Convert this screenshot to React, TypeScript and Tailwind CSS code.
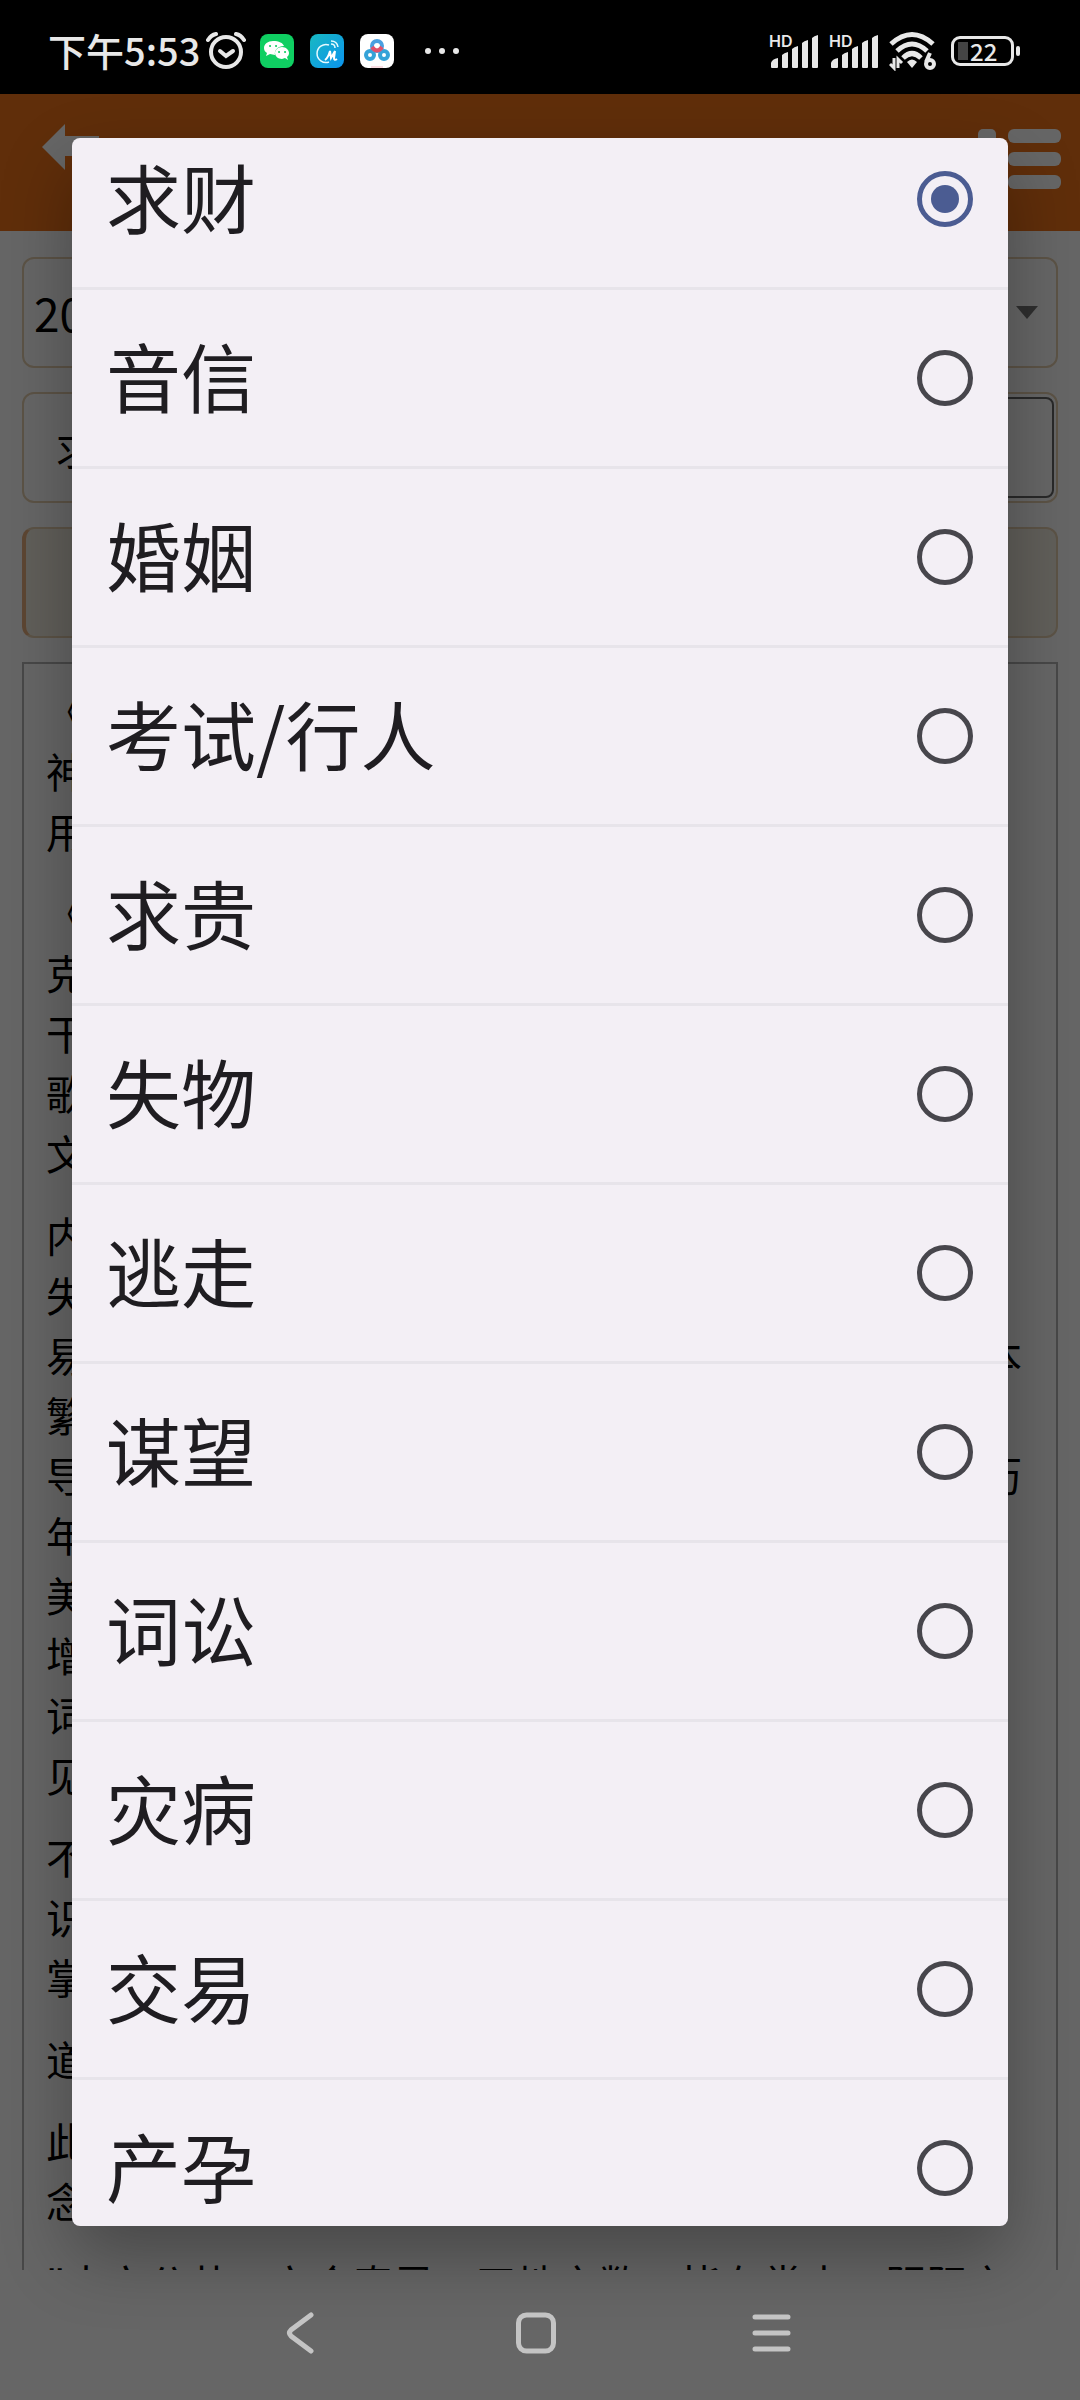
import { useState } from "react";

const OPTIONS = [
  "求财",
  "音信",
  "婚姻",
  "考试/行人",
  "求贵",
  "失物",
  "逃走",
  "谋望",
  "词讼",
  "灾病",
  "交易",
  "产孕",
];

// Each paragraph is a list of lines: [start, end]
const PARAGRAPHS: [string, string][][] = [
  [["《", ""], ["神", ""], ["用", ""]],
  [["《", ""], ["克", ""], ["干", ""], ["歌", ""], ["文", ""]],
  [
    ["内", ""],
    ["失", ""],
    ["易", "本"],
    ["繁", ""],
    ["导", "历"],
    ["年", ""],
    ["美", ""],
    ["增", ""],
    ["词", ""],
    ["见", ""],
  ],
  [["不", ""], ["识", ""], ["掌", ""]],
  [["道", ""]],
  [["此", ""], ["念", ""]],
  [["\"大六公共，六合奇灵，天地之数，皆在掌中，阴阳之", ""]],
];

const SignalIcon = () => (
  <div className="relative h-9 w-[52px]">
    <svg width="52" height="36" viewBox="0 0 52 36" fill="#e8e8e8">
      <path d="M2 34v-4q1-4 7-5v9q0 1-1 1h-5q-1 0-1-1zM13 22q2-2 6-3v15q0 1-1 1h-4q-1 0-1-1zM23 16q2-2 6-3v21q0 1-1 1h-4q-1 0-1-1zM33 10q2-2 6-3v27q0 1-1 1h-4q-1 0-1-1zM43 5q2-2 6-3v32q0 1-1 1h-4q-1 0-1-1z" />
    </svg>
    <span className="absolute top-0 left-0 font-['Inter',sans-serif] text-base leading-4 font-semibold">HD</span>
  </div>
);

const WifiIcon = () => (
  <svg width="48" height="40" viewBox="0 0 48 40" fill="none" stroke="#e8e8e8">
    <path d="M2 13q21-19 42 0" strokeWidth="5" />
    <path d="M8 20q15-14 30 0" strokeWidth="5" />
    <path d="M14 27q9-9 18 0" strokeWidth="5" />
    <path d="M18 31q5-5 10 0l-5 6z" fill="#e8e8e8" stroke="none" />
    <path d="M5 27v10l-4-4M9 37v-9l4 4" strokeWidth="3" />
    <circle cx="41" cy="33" r="4" strokeWidth="4" />
    <path d="M37 31l4-9" strokeWidth="4" />
  </svg>
);

const Battery = () => (
  <div className="ml-1.5 flex items-center gap-0.5">
    <div className="flex h-[30px] w-[63px] items-center rounded-[9px] border-3 border-[#e8e8e8] pl-1">
      <div className="h-[18px] w-2.5 bg-[#444]"></div>
      <span className="pl-0.5 text-2xl leading-6 font-medium">22</span>
    </div>
    <div className="h-2.5 w-1 rounded-full bg-[#e8e8e8]"></div>
  </div>
);

const StatusBar = () => (
  <div className="flex h-[94px] shrink-0 items-center bg-black pl-12 pr-[60px] pt-2 text-[#e8e8e8]">
    <span className="pb-0.5 text-[38px] leading-none font-medium">下午5:53</span>
    <svg className="ml-1.5" width="40" height="38" viewBox="0 0 40 38" fill="none" stroke="#e8e8e8" strokeLinecap="round">
      <circle cx="20" cy="20" r="15" strokeWidth="4" />
      <path d="M14 19l6 5 7-5" strokeWidth="4" />
      <path d="M2 8q3-5 8-6M30 2q5 1 8 6" strokeWidth="4" />
    </svg>
    <div className="ml-3.5 flex gap-4">
      <svg width="34" height="34" viewBox="0 0 34 34">
        <rect width="34" height="34" rx="8" fill="#0fcf62" />
        <path d="M13 7c-5 0-9 3-9 7 0 2 1 4 3 5l-1 3 4-2 5 1c-1-5 3-9 9-9-1-3-5-5-11-5z" fill="#fff" />
        <path d="M22 13c-4 0-7 3-7 6s3 6 7 6l3-1 3 2-1-3c1-1 2-2 2-4 0-3-3-6-7-6z" fill="#fff" />
        <path d="M10 12h.1M16 12h.1M19 18h.1M25 18h.1" stroke="#0fcf62" strokeWidth="2" strokeLinecap="round" />
      </svg>
      <svg width="34" height="34" viewBox="0 0 34 34" fill="none">
        <defs>
          <linearGradient id="blue" x1="0" y1="0" x2="1" y2="1">
            <stop offset="0" stopColor="#18b9c2" />
            <stop offset="1" stopColor="#0b93ee" />
          </linearGradient>
        </defs>
        <rect width="34" height="34" rx="8" fill="url(#blue)" />
        <path d="M19 11a9 9 0 1 0 0 17" stroke="#e6faff" strokeWidth="1.5" />
        <path d="M15 26q3-2 5-9l1 7 4-7-1 7q0 3 3 1" stroke="#fff" strokeWidth="2" />
        <path d="M21 10q4 0 4 4M21 7q6 0 7 6" stroke="#e6faff" strokeWidth="1.5" />
      </svg>
      <svg width="34" height="34" viewBox="0 0 34 34" fill="none" strokeWidth="4">
        <rect width="34" height="34" rx="8" fill="#fff" />
        <circle cx="10" cy="21" r="4" stroke="#35a3d8" />
        <circle cx="24" cy="21" r="4" stroke="#35a3d8" />
        <circle cx="17" cy="12" r="5" stroke="#4a9fe0" />
        <path d="M12 13q5 7 10 0" stroke="#e0506a" />
        <path d="M11 33h12" stroke="#f3b9c4" strokeWidth="1" />
      </svg>
    </div>
    <svg className="ml-[30px]" width="36" height="8" viewBox="0 0 36 8" fill="#e8e8e8">
      <circle cx="4" cy="4" r="3" />
      <circle cx="18" cy="4" r="3" />
      <circle cx="32" cy="4" r="3" />
    </svg>
    <div className="ml-auto flex items-center gap-2">
      <SignalIcon />
      <SignalIcon />
      <WifiIcon />
      <Battery />
    </div>
  </div>
);

const PageContent = () => (
  <div className="flex min-h-0 flex-1 flex-col overflow-hidden">
    <header className="flex h-[137px] shrink-0 items-start justify-between bg-[#f07319] pl-[42px] pr-[19px]">
      <button aria-label="返回" className="mt-[30px]">
        <svg width="60" height="46" viewBox="0 0 60 46" fill="#fff">
          <path d="M0 23L23 0v12h34v20H23v14z" />
        </svg>
      </button>
      <button aria-label="菜单" className="mt-[35px]">
        <svg width="83" height="60" viewBox="0 0 83 60" fill="#fff">
          <rect y="0" width="18" height="14" rx="5" />
          <rect x="30" y="0" width="53" height="14" rx="6" />
          <rect x="30" y="23" width="53" height="14" rx="6" />
          <rect x="30" y="46" width="53" height="14" rx="6" />
        </svg>
      </button>
    </header>
    <main className="flex flex-1 flex-col px-[22px] pt-[26px]">
      <div className="mb-6 flex h-[111px] shrink-0 items-center justify-between rounded-xl border-2 border-[#e6cfae] px-2.5">
        <span className="text-[46px]">20</span>
        <svg width="38" height="14" viewBox="0 0 38 14" fill="#777">
          <path d="M8 0h22L19 13z" />
        </svg>
      </div>
      <div className="mb-6 flex h-[111px] shrink-0 items-center justify-between rounded-xl border-2 border-[#e6cfae] pl-8 pr-0.5">
        <span className="text-[41px]">求财</span>
        <input aria-label="事项" className="h-[101px] w-1/2 rounded-lg border-2 border-[#666]" />
      </div>
      <button
        aria-label="起课"
        className="mb-6 h-[111px] shrink-0 rounded-xl border-2 border-l-4 border-[#e6cfae] border-l-[#e8b080] bg-[#f3eee2]"
      ></button>
      <article className="flex-1 border-2 border-b-0 border-[#b4b4b4] px-[22px] pt-4 text-[41px] leading-[60px]">
        {PARAGRAPHS.map((lines, i) => (
          <div key={i} className="mb-[22px]">
            {lines.map(([start, end], j) => (
              <p key={j} className="flex justify-between whitespace-nowrap pr-3">
                <span>{start}</span>
                <span>{end}</span>
              </p>
            ))}
          </div>
        ))}
      </article>
    </main>
  </div>
);

const NavBar = () => (
  <nav className="flex h-[130px] shrink-0 items-center justify-center gap-[196px] pr-2 pb-1">
    <button aria-label="后退">
      <svg width="40" height="42" viewBox="0 0 40 42" fill="none" stroke="#c4c4c4" strokeWidth="5" strokeLinecap="round">
        <path d="M31 3L11 18q-3 3 0 6l20 15" />
      </svg>
    </button>
    <button aria-label="主页">
      <svg width="40" height="42" viewBox="0 0 40 42" fill="none" stroke="#c4c4c4" strokeWidth="5">
        <rect x="2.5" y="3" width="35" height="36" rx="8" />
      </svg>
    </button>
    <button aria-label="最近任务">
      <svg width="40" height="42" viewBox="0 0 40 42" stroke="#c4c4c4" strokeWidth="5" strokeLinecap="round">
        <path d="M3 5h33M3 21h33M3 37h33" />
      </svg>
    </button>
  </nav>
);

export default function App() {
  const [selected, setSelected] = useState("求财");

  return (
    <div className="relative flex h-screen flex-col overflow-hidden bg-white font-['Noto_Sans_CJK_SC',sans-serif] text-black">
      <StatusBar />
      <PageContent />

      {/* dimmed backdrop with the option list on top */}
      <div className="absolute inset-x-0 top-[94px] bottom-0 flex flex-col bg-black/60">
        <div
          role="dialog"
          aria-label="选择"
          className="mx-[72px] my-11 flex min-h-0 flex-1 flex-col justify-center overflow-hidden rounded-lg bg-[#f3eff5] shadow-[0_30px_70px_rgba(0,0,0,0.3)]"
        >
          {OPTIONS.map((option, i) => (
            <label
              key={option}
              className={`flex h-[179px] shrink-0 items-center justify-between border-t-3 pl-[34px] pr-[35px] ${
                i === 0 ? "border-transparent" : "border-[#e7e4ea]"
              }`}
            >
              <span className="pb-2 text-[75px] leading-none text-[#1f1d21]">{option}</span>
              <input
                type="radio"
                name="option"
                checked={selected === option}
                onChange={() => setSelected(option)}
                className="grid size-14 appearance-none place-items-center rounded-full border-5 border-[#47464c] before:size-7 before:rounded-full checked:border-[#4b5c92] checked:before:bg-[#4b5c92]"
              />
            </label>
          ))}
        </div>
        <NavBar />
      </div>
      <div className="h-[130px] shrink-0"></div>
    </div>
  );
}
